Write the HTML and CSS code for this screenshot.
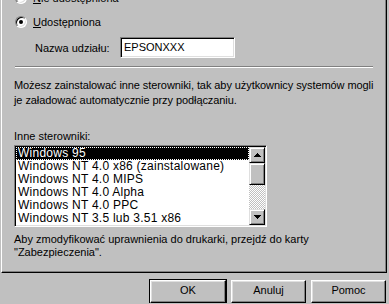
FILE: index.html
```html
<!DOCTYPE html>
<html lang="pl">
<head>
    <meta charset="UTF-8">
    <meta name="viewport" content="width=device-width, initial-scale=1.0">
    <title>Udostępnianie</title>
    <link rel="stylesheet" href="styles.css">
</head>
<body>
    <div class="panel">
        <div class="radioRow">
            <span class="radio"></span>
            <span><u>N</u>ie udostępniona</span>
        </div>
        <div class="radioRow">
            <span class="radio checked"></span>
            <span><u>U</u>dostępniona</span>
        </div>
        <div class="shareRow">
            <span class="shareLabel">Nazwa udziału:</span>
            <div class="textBox">EPSONXXX</div>
        </div>
        <div class="separator"></div>
        <p class="info">Możesz zainstalować inne sterowniki, tak aby użytkownicy systemów mogli<br>je załadować automatycznie przy podłączaniu.</p>
        <div class="listLabel">Inne sterowniki:</div>
        <div class="listBox">
            <div class="listItems">
                <div class="item selected"><span>Windows 95</span></div>
                <div class="item">Windows NT 4.0 x86 (zainstalowane)</div>
                <div class="item">Windows NT 4.0 MIPS</div>
                <div class="item">Windows NT 4.0 Alpha</div>
                <div class="item">Windows NT 4.0 PPC</div>
                <div class="item">Windows NT 3.5 lub 3.51 x86</div>
            </div>
            <div class="scrollBar">
                <div class="scrollBtn">
                    <svg width="7" height="4" viewBox="0 0 7 4"><path d="M3 0h1v1h1v1h1v1h1v1H0V3h1V2h1V1h1z" fill="#000"/></svg>
                </div>
                <div class="thumb"></div>
                <div class="track"></div>
                <div class="scrollBtn">
                    <svg width="7" height="4" viewBox="0 0 7 4"><path d="M0 0h7v1H6v1H5v1H4v1H3V3H2V2H1V1H0z" fill="#000"/></svg>
                </div>
            </div>
        </div>
        <p class="note">Aby zmodyfikować uprawnienia do drukarki, przejdź do karty<br>"Zabezpieczenia".</p>
    </div>
    <div class="buttons">
        <button class="btn default">OK</button>
        <button class="btn">Anuluj</button>
        <button class="btn">Pomoc</button>
    </div>
</body>
</html>
```
FILE: styles.css
```css
*{
    box-sizing: border-box;
}
body{
    margin: 0;
    background-color: #c0c0c0;
    font-family: "Liberation Sans", Arial, sans-serif;
    font-size: 11px;
    color: #000;
    overflow: hidden;
}
.panel{
    margin: -14px 0 0 1px;
    width: 386px;
    padding: 0 0 0 12px;
    border-left: 1px solid #fff;
    border-right: 1px solid #000;
    border-bottom: 1px solid #000;
    box-shadow: inset -1px -1px #808080;
    height: 287px;
}
.radioRow{
    display: flex;
    align-items: center;
    gap: 6px;
    height: 24px;
    padding-left: 1px;
}
.radio{
    position: relative;
    width: 12px; height: 12px;
    border-radius: 50%;
    background-color: #fff;
    border: 1px solid;
    border-color: #808080 #fff #fff #808080;
    box-shadow: inset 1px 1px #000, inset -1px -1px #dfdfdf;
}
.radio.checked::after{
    content: "";
    position: absolute;
    left: 3px; top: 3px;
    width: 4px; height: 4px;
    border-radius: 50%;
    background-color: #000;
}
.shareRow{
    display: flex;
    align-items: center;
    height: 24px;
    padding-top: 3px;
}
.shareLabel{
    width: 106px;
    padding-left: 21px;
}
.textBox{
    width: 115px; height: 21px;
    background-color: #fff;
    border: 1px solid;
    border-color: #808080 #fff #fff #808080;
    box-shadow: inset 1px 1px #000, inset -1px -1px #dfdfdf;
    padding: 3px 3px;
    line-height: 13px;
}
.separator{
    margin: 8px 0 0 1px;
    width: 358px;
    border-top: 1px solid #808080;
    border-bottom: 1px solid #fff;
}
.info{
    margin: 10px 0 0 0;
    line-height: 15px;
    letter-spacing: -0.08px;
    white-space: nowrap;
}
.listLabel{
    margin-top: 21px;
    line-height: 15px;
}
.listBox{
    display: flex;
    margin-top: 1px;
    width: 253px; height: 82px;
    background-color: #fff;
    border: 1px solid;
    border-color: #808080 #fff #fff #808080;
    box-shadow: inset 1px 1px #000, inset -1px -1px #dfdfdf;
    padding: 1px;
}
.listItems{
    flex: 1;
}
.item{
    height: 13px;
    line-height: 13px;
    padding-left: 2px;
    white-space: nowrap;
    font-size: 12px;
    letter-spacing: 0.25px;
}
.item.selected{
    background-color: #000;
    color: #fff;
    outline: 1px dotted #fff;
    outline-offset: -1px;
}
.scrollBar{
    display: flex;
    flex-direction: column;
    width: 16px;
}
.scrollBtn, .thumb{
    height: 16px;
    background-color: #c0c0c0;
    border: 1px solid;
    border-color: #dfdfdf #000 #000 #dfdfdf;
    box-shadow: inset 1px 1px #fff, inset -1px -1px #808080;
    display: flex;
    align-items: center;
    justify-content: center;
}
.thumb{
    height: 22px;
}
.track{
    flex: 1;
    background-color: #fff;
    background-image: repeating-conic-gradient(#c0c0c0 0 25%, #fff 0 50%);
    background-size: 2px 2px;
}
.note{
    margin: 6px 0 0 0;
    line-height: 13px;
    white-space: nowrap;
}
.buttons{
    display: flex;
    justify-content: flex-end;
    gap: 5px;
    padding-right: 3px;
    margin-top: 7px;
}
.btn{
    width: 75px; height: 23px;
    font-family: inherit;
    font-size: 11px;
    color: #000;
    background-color: #c0c0c0;
    border: 1px solid;
    border-color: #fff #000 #000 #fff;
    box-shadow: inset -1px -1px #808080, inset 1px 1px #dfdfdf;
    padding: 0 0 3px;
}
.btn.default{
    width: 76px;
    outline: 1px solid #000;
    outline-offset: 0;
}
```
